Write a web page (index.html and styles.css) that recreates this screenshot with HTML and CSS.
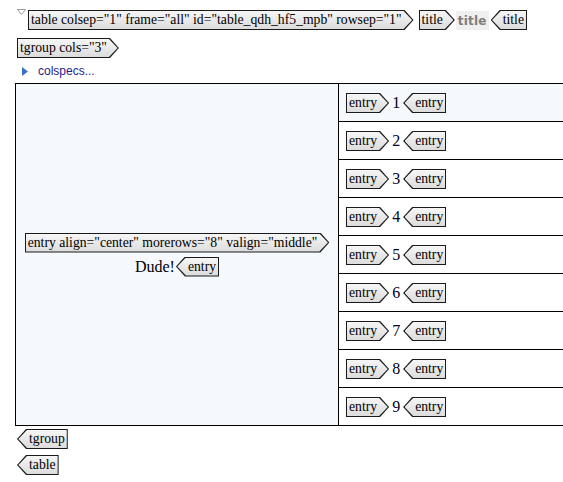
FILE: index.html
```
<!DOCTYPE html>
<html>
<head>
<meta charset="utf-8">
<link rel="stylesheet" href="styles.css">
</head>
<body>
<div class="doc">
  <div class="line top">
    <svg class="twisty" width="9" height="6" viewBox="0 0 9 6"><polygon points="0.5,0.5 8.5,0.5 4.5,5.5" fill="#fff" stroke="#9a9a9a" stroke-width="1"/></svg>
    <span class="tag start t-table">table colsep="1" frame="all" id="table_qdh_hf5_mpb" rowsep="1"</span>
    <span class="tag start t-title">title</span>
    <span class="ph">title</span>
    <span class="tag end t-title-end">title</span>
  </div>
  <div class="line second"><span class="tag start">tgroup cols="3"</span></div>
  <div class="colspecs">
    <svg class="expander" width="6" height="9" viewBox="0 0 6 9"><polygon points="0,0 6,4.5 0,9" fill="#3a72c2"/></svg>
    <span class="colspecs-label">colspecs...</span>
  </div>
  <div class="tbl">
    <div class="span-cell">
      <div><span class="tag start">entry align="center" morerows="8" valign="middle"</span></div>
      <div class="dude">Dude!<span class="tag end">entry</span></div>
    </div>
    <div class="cell current"><span class="tag start">entry</span><span class="num">1</span><span class="tag end">entry</span></div>
    <div class="cell"><span class="tag start">entry</span><span class="num">2</span><span class="tag end">entry</span></div>
    <div class="cell"><span class="tag start">entry</span><span class="num">3</span><span class="tag end">entry</span></div>
    <div class="cell"><span class="tag start">entry</span><span class="num">4</span><span class="tag end">entry</span></div>
    <div class="cell"><span class="tag start">entry</span><span class="num">5</span><span class="tag end">entry</span></div>
    <div class="cell"><span class="tag start">entry</span><span class="num">6</span><span class="tag end">entry</span></div>
    <div class="cell"><span class="tag start">entry</span><span class="num">7</span><span class="tag end">entry</span></div>
    <div class="cell"><span class="tag start">entry</span><span class="num">8</span><span class="tag end">entry</span></div>
    <div class="cell last"><span class="tag start">entry</span><span class="num">9</span><span class="tag end">entry</span></div>
  </div>
  <div class="line close1"><span class="tag end">tgroup</span></div>
  <div class="line close2"><span class="tag end">table</span></div>
</div>
</body>
</html>
```
FILE: styles.css
```
html, body {
  margin: 0;
  padding: 0;
  background: #fff;
  overflow: hidden;
}
body {
  font-family: "Liberation Serif", "Times New Roman", serif;
  font-size: 16px;
  color: #000;
  width: 563px;
  height: 482px;
}
.doc {
  padding-top: 10px;
}
.line {
  display: flex;
  align-items: center;
  height: 20px;
  margin-left: 17px;
}
.top {
  align-items: flex-start;
}
.twisty {
  display: block;
  margin-top: -1px;
  margin-right: 2px;
}
.second {
  margin-top: 8px;
}
.tag {
  position: relative;
  z-index: 0;
  display: inline-block;
  box-sizing: border-box;
  height: 20px;
  line-height: 20px;
  font-family: "Liberation Serif", "Times New Roman", serif;
  font-size: 13.7px;
  white-space: nowrap;
  color: #000;
}
.tag::before,
.tag::after {
  content: "";
  position: absolute;
  z-index: -1;
}
.tag::before {
  inset: 0;
  background: #1a1a1a;
}
.tag::after {
  top: 1px;
  bottom: 1px;
  background: linear-gradient(#f6f6f6, #dcdcdc);
}
.tag.start {
  padding: 0 12px 0 3px;
}
.tag.start::before {
  clip-path: polygon(0 0, calc(100% - 9px) 0, 100% 50%, calc(100% - 9px) 100%, 0 100%);
}
.tag.start::after {
  left: 1px;
  right: 1.4px;
  clip-path: polygon(0 0, calc(100% - 8.6px) 0, 100% 50%, calc(100% - 8.6px) 100%, 0 100%);
}
.tag.end {
  padding: 0 3px 0 12px;
}
.tag.end::before {
  clip-path: polygon(9px 0, 100% 0, 100% 100%, 9px 100%, 0 50%);
}
.tag.end::after {
  left: 1.4px;
  right: 1px;
  clip-path: polygon(8.6px 0, 100% 0, 100% 100%, 8.6px 100%, 0 50%);
}
.t-title {
  margin-left: 5px;
}
.ph {
  display: inline-block;
  margin-left: 1px;
  margin-top: 1px;
  height: 19px;
  line-height: 20px;
  padding: 0 2px;
  background: #efefef;
  color: #7d7d7d;
  font-family: "DejaVu Sans", Verdana, sans-serif;
  font-weight: bold;
  font-size: 12px;
  letter-spacing: 0.2px;
}
.t-title-end {
  margin-left: 2px;
}
.colspecs {
  display: flex;
  align-items: center;
  height: 14px;
  margin-top: 6px;
  margin-left: 22px;
}
.expander {
  display: block;
  margin-right: 10px;
}
.colspecs-label {
  font-family: "Liberation Sans", Arial, sans-serif;
  font-size: 12px;
  color: #1e1e88;
}
.tbl {
  display: grid;
  grid-template-columns: 323px 1fr;
  box-sizing: border-box;
  width: 548px;
  margin-top: 5px;
  margin-left: 15px;
  border: 1px solid #000;
  border-right: none;
}
.span-cell {
  grid-row: 1 / span 9;
  box-sizing: border-box;
  border-right: 1px solid #000;
  background: #f5f8fc;
  display: flex;
  flex-direction: column;
  align-items: center;
  justify-content: center;
  gap: 4px;
}
.dude {
  display: flex;
  align-items: center;
  height: 20px;
}
.dude .tag {
  margin-left: 1px;
}
.cell {
  box-sizing: border-box;
  height: 38px;
  border-bottom: 1px solid #000;
  display: flex;
  align-items: center;
  padding-left: 7px;
  padding-top: 1px;
}
.cell.last {
  height: 37px;
  border-bottom: none;
}
.cell.current {
  background: #f5f8fc;
}
.num {
  font-size: 16px;
  margin: 0 3px;
  color: #000022;
}
.close1 {
  margin-top: 3px;
}
.close2 {
  margin-top: 6px;
}
```
